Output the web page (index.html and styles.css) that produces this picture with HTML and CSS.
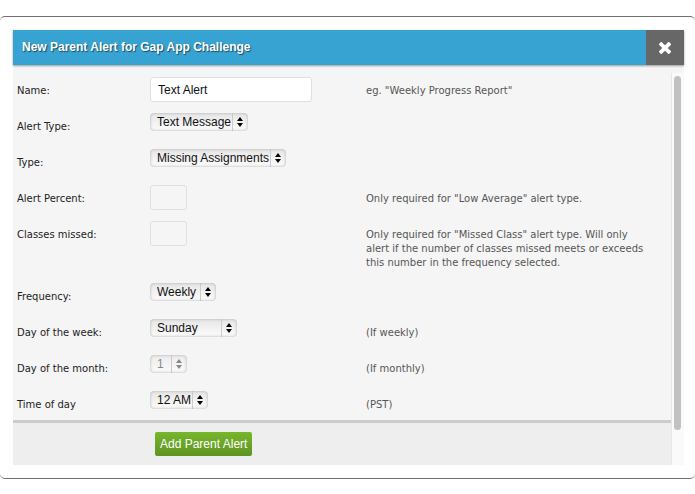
FILE: index.html
```html
<!DOCTYPE html>
<html lang="en">
<head>
<meta charset="utf-8">
<title>New Parent Alert</title>
<link rel="stylesheet" href="styles.css">
</head>

<body>
<div class="dialog">
<div class="header">
	<h1>New Parent Alert for Gap App Challenge</h1>
	<button type="button" class="close" aria-label="Close">
		<svg width="12" height="12" viewBox="0 0 12 12"><path d="M2.300 2.300L9.700 9.700M9.700 2.300L2.300 9.700" stroke="#fff" stroke-width="3.800" stroke-linecap="square"/></svg>
	</button>
</div>
<div class="content">
<form>
<ul>
<li>
	<label for="name">Name:</label>
	<div class="field"><input type="text" id="name" name="name" value="Text Alert"></div>
	<p>eg. "Weekly Progress Report"</p>
</li>
<li>
	<label for="alertType">Alert Type:</label>
	<div class="field"><select id="alertType" name="alertType">
		<option>Text Message</option>
		<option>Email</option>
	</select></div>
</li>
<li>
	<label for="type">Type:</label>
	<div class="field"><select id="type" name="type">
		<option>Missing Assignments</option>
		<option>Low Average</option>
		<option>Missed Class</option>
	</select></div>
</li>
<li>
	<label for="percent">Alert Percent:</label>
	<div class="field"><input type="text" class="short" id="percent" name="percent" disabled></div>
	<p>Only required for "Low Average" alert type.</p>
</li>
<li>
	<label for="missed">Classes missed:</label>
	<div class="field"><input type="text" class="short" id="missed" name="missed" disabled></div>
	<p>Only required for "Missed Class" alert type. Will only alert if the number of classes missed meets or exceeds this number in the frequency selected.</p>
</li>
<li>
	<label for="frequency">Frequency:</label>
	<div class="field"><select id="frequency" name="frequency">
		<option>Weekly</option>
		<option>Monthly</option>
	</select></div>
</li>
<li>
	<label for="weekday">Day of the week:</label>
	<div class="field"><select id="weekday" name="weekday">
		<option>Sunday</option>
		<option>Monday</option>
		<option>Tuesday</option>
		<option>Wednesday</option>
		<option>Thursday</option>
		<option>Friday</option>
		<option>Saturday</option>
	</select></div>
	<p>(If weekly)</p>
</li>
<li>
	<label for="monthday">Day of the month:</label>
	<div class="field"><select id="monthday" name="monthday" disabled>
		<option>1</option>
		<option>15</option>
		<option>31</option>
	</select></div>
	<p>(If monthly)</p>
</li>
<li>
	<label for="time">Time of day</label>
	<div class="field"><select id="time" name="time">
		<option>12 AM</option>
		<option>6 AM</option>
		<option>12 PM</option>
		<option>6 PM</option>
	</select></div>
	<p>(PST)</p>
</li>
</ul>
<div class="actions">
	<button type="submit" class="add">Add Parent Alert</button>
</div>
</form>
<div class="scrollbar"><div class="thumb"></div></div>
</div>
</div>
</body>
</html>
```
FILE: styles.css
```css
* {
	box-sizing: border-box;
}

body {
	margin: 0;
	padding: 16px 0;
	background: #fff;
	font-family: Verdana, "DejaVu Sans", sans-serif;
	font-size: 10px;
	line-height: 14px;
	color: #333;
}

.dialog {
	padding: 13px 11px 13px 13px;
	border: solid #707070;
	border-width: 1px 0;
	border-radius: 5px;
}

.header {
	display: flex;
	position: relative;
	height: 35px;
	background: #37a3d3;
	box-shadow: 0 1px 2px #999;
}

.header h1 {
	flex: 1;
	margin: 0;
	padding-left: 9px;
	font: bold 12px/35px "Liberation Sans", Arial, sans-serif;
	color: #fff;
	text-shadow: 1px 1px 1px #1c4a60;
}

.close {
	display: flex;
	align-items: center;
	justify-content: center;
	width: 38px;
	padding: 0;
	border: 0;
	background: #676767;
}

.content {
	display: flex;
	background: #f5f5f5;
}

form {
	flex: 1;
}

ul {
	list-style: none;
	margin: 0;
	padding: 7px 0 0;
	border-bottom: 3px solid #ccc;
}

li {
	display: grid;
	grid-template-columns: 137px 216px 1fr;
	align-items: start;
	min-height: 36px;
}

li:last-child {
	min-height: 34px;
}

label {
	padding: 12px 0 0 4px;
	color: #222;
}

li p {
	margin: 0;
	padding: 12px 20px 8px 0;
	color: #555;
}

.field {
	display: flex;
	padding-top: 5px;
}

input {
	width: 162px;
	height: 25px;
	padding: 0 7px;
	border: 1px solid #e0e0e0;
	border-radius: 3px;
	background: #fff;
	font: 12px "Liberation Sans", Arial, sans-serif;
	color: #111;
}

input.short {
	width: 37px;
}

input:disabled {
	background: #f5f5f5;
}

select {
	appearance: none;
	height: 18px;
	padding: 0 16px 1px 7px;
	border: 0;
	border-radius: 4px;
	background:
		url("data:image/svg+xml,%3Csvg xmlns='http://www.w3.org/2000/svg' width='16' height='18'%3E%3Cpath d='M.5 0V18' stroke='%23ccc'/%3E%3Cpath d='M5 8L8 4L11 8ZM5 10L8 14L11 10Z'/%3E%3C/svg%3E") right center no-repeat,
		linear-gradient(#e6e6e6, #fcfcfc);
	box-shadow: inset 0 0 3px #aaa;
	font: 12px "Liberation Sans", Arial, sans-serif;
	color: #111;
}

select:disabled {
	color: #888;
	opacity: 1;
	background:
		url("data:image/svg+xml,%3Csvg xmlns='http://www.w3.org/2000/svg' width='16' height='18'%3E%3Cpath d='M.5 0V18' stroke='%23ccc'/%3E%3Cpath fill='%23888' d='M5 8L8 4L11 8ZM5 10L8 14L11 10Z'/%3E%3C/svg%3E") right center no-repeat,
		linear-gradient(#ececec, #fbfbfb);
}

.actions {
	padding: 9px 142px;
	background: #eee;
}

.add {
	display: block;
	height: 24px;
	padding: 0 5px;
	border: 0;
	border-radius: 2px;
	background: linear-gradient(#78b62c, #5d9422);
	font: 12px "Liberation Sans", Arial, sans-serif;
	color: #fff;
	white-space: nowrap;
}

.scrollbar {
	width: 13px;
	margin-top: 8px;
	padding: 3px 3px 0 2px;
	border-left: 1px solid #e6e6e6;
	background: #fafafa;
}

.thumb {
	height: 91%;
	border-radius: 4px;
	background: #c1c1c1;
}
```
